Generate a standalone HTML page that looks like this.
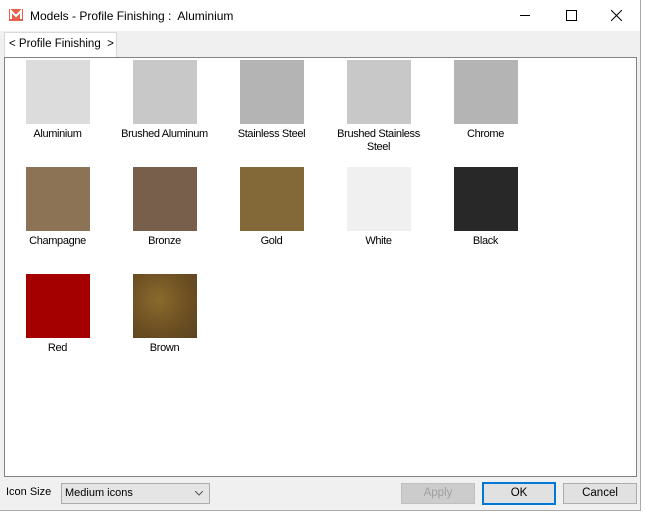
<!DOCTYPE html>
<html><head><style>
body{margin:0;width:645px;height:512px;background:#fff;font-family:"Liberation Sans",sans-serif;position:relative;overflow:hidden}
.win{position:absolute;left:0;top:0;width:640px;height:510px;background:#f0f0f0;border-right:1px solid #aaa;border-bottom:1px solid #aaa}
.title{position:absolute;left:0;top:0;width:640px;height:31px;background:#fff;font-size:12px}
.title .t{position:absolute;left:30px;top:9px;color:#000}
.tab{position:absolute;left:4px;top:32px;width:111px;height:25px;background:#fff;border:1px solid #d9d9d9;border-bottom:none;font-size:11.5px;white-space:nowrap}
.tab span{position:absolute;left:4px;top:5px}
.panel{position:absolute;left:4px;top:57px;width:631px;height:418px;background:#fff;border:1px solid #828282}
.it{position:absolute;width:107px;text-align:center;font-size:11px;line-height:13px;color:#000;letter-spacing:-0.35px}
.sw{width:64px;height:64px;margin:0 auto 4px}
.lbl{position:absolute;left:6px;top:486px;font-size:11px}
.sel{position:absolute;left:61px;top:483px;width:147px;height:19px;background:#e5e5e5;border:1px solid #acacac;font-size:11px}
.btn{position:absolute;top:483px;width:72px;height:19px;border:1px solid #adadad;background:#e1e1e1;font-size:11.5px;text-align:center;line-height:19px}
</style></head><body>
<div class="win">
<div class="title">
<svg style="position:absolute;left:9px;top:9px" width="14" height="12" viewBox="0 0 14 12"><rect x="0" y="0" width="14" height="12" fill="#e8604c"/><path d="M2 10V2l5 5 5-5v8" stroke="#fff" stroke-width="2" fill="none"/></svg>
<span class="t">Models - Profile Finishing :&nbsp; Aluminium</span>
<svg style="position:absolute;left:520px;top:15px" width="10" height="1"><rect width="10" height="1" fill="#000"/></svg>
<svg style="position:absolute;left:566px;top:10px" width="11" height="11"><rect x=".5" y=".5" width="10" height="10" fill="none" stroke="#000"/></svg>
<svg style="position:absolute;left:611px;top:10px" width="11" height="11"><path d="M0 0L11 11M11 0L0 11" stroke="#000"/></svg>
</div>
<div class="tab"><span>&lt; Profile Finishing&nbsp; &gt;</span></div>
<div class="panel">
<div class="it" style="left:-1px;top:2px"><div class="sw" style="background:#dcdcdc"></div>Aluminium</div>
<div class="it" style="left:106px;top:2px"><div class="sw" style="background:#c8c8c8"></div>Brushed Aluminum</div>
<div class="it" style="left:213px;top:2px"><div class="sw" style="background:#b4b4b4"></div>Stainless Steel</div>
<div class="it" style="left:320px;top:2px"><div class="sw" style="background:#c8c8c8"></div>Brushed Stainless<br>Steel</div>
<div class="it" style="left:427px;top:2px"><div class="sw" style="background:#b4b4b4"></div>Chrome</div>
<div class="it" style="left:-1px;top:109px"><div class="sw" style="background:#8c7355"></div>Champagne</div>
<div class="it" style="left:106px;top:109px"><div class="sw" style="background:#785f4b"></div>Bronze</div>
<div class="it" style="left:213px;top:109px"><div class="sw" style="background:#826937"></div>Gold</div>
<div class="it" style="left:320px;top:109px"><div class="sw" style="background:#f0f0f0"></div>White</div>
<div class="it" style="left:427px;top:109px"><div class="sw" style="background:#282828"></div>Black</div>
<div class="it" style="left:-1px;top:216px"><div class="sw" style="background:#a50000"></div>Red</div>
<div class="it" style="left:106px;top:216px"><div class="sw" style="background:radial-gradient(circle at 40% 40%,#8a6a2c,#6b4e22 60%,#5a4420)"></div>Brown</div>
</div>
<div class="lbl">Icon Size</div>
<div class="sel"><span style="position:absolute;left:3px;top:3px">Medium icons</span><svg style="position:absolute;right:6px;top:7px" width="8" height="5"><path d="M0 0L4 4L8 0" stroke="#555" fill="none"/></svg></div>
<div class="btn" style="left:401px;color:#a0a0a0;background:#ccc;border-color:#bfbfbf">Apply</div>
<div class="btn" style="left:482px;border:2px solid #0078d7;top:482px;width:70px;line-height:19px">OK</div>
<div class="btn" style="left:563px">Cancel</div>
</div>
</body></html>
